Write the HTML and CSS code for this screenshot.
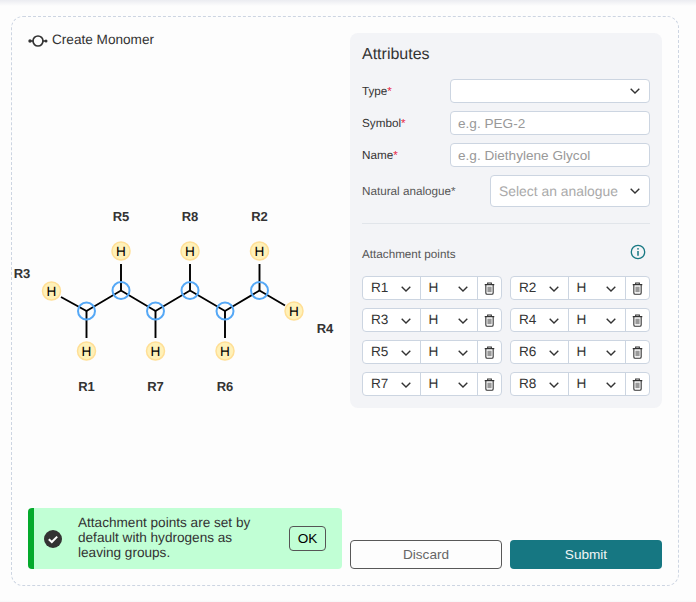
FILE: index.html
```html
<!DOCTYPE html>
<html lang="en">
<head>
<meta charset="UTF-8">
<title>Create Monomer</title>
<link rel="stylesheet" href="styles.css">
</head>
<body>
<svg class="defs" width="0" height="0">
    <symbol id="chev" viewBox="0 0 10 6">
        <path d="M0.7 0.8 L5 5 L9.3 0.8" fill="none" stroke="#333" stroke-width="1.4"/>
    </symbol>
    <symbol id="trash" viewBox="0 0 12 14">
        <path d="M0.8 2.8 H11.2 M4 2.6 V1 H8 V2.6 M2 2.8 V11.8 Q2 13.3 3.5 13.3 H8.5 Q10 13.3 10 11.8 V2.8" fill="none" stroke="#333" stroke-width="1.2"/>
        <rect x="3.7" y="5" width="4.6" height="6" fill="#999"/>
    </symbol>
</svg>
<div class="card">
    <div class="left">
        <div class="head">
            <svg width="20" height="12" viewBox="0 0 20 12">
                <circle cx="10" cy="6" r="5" fill="none" stroke="#333" stroke-width="1.7"/>
                <path d="M2 6 H5 M15 6 H18" stroke="#333" stroke-width="1.7"/>
                <circle cx="2" cy="6" r="1.7" fill="#333"/>
                <circle cx="18" cy="6" r="1.5" fill="#333"/>
            </svg>
            <span>Create Monomer</span>
        </div>
        <!-- molecule, viewBox uses page coordinates -->
        <svg class="mol" width="330" height="220" viewBox="12 190 330 220">
            <g class="bond">
                <path d="M61 297 L86.5 311 L121 290.5 L155.5 311 L190 290.5 L225 311 L259.5 290.5 L285 305.5"/>
                <path d="M86.5 311 V338 M121 290.5 V264 M155.5 311 V338 M190 290.5 V264 M225 311 V338 M259.5 290.5 V264"/>
            </g>
            <g class="atom">
                <circle cx="86.5" cy="311" r="8.5"/>
                <circle cx="121" cy="290.5" r="8.5"/>
                <circle cx="155.5" cy="311" r="8.5"/>
                <circle cx="190" cy="290.5" r="8.5"/>
                <circle cx="225" cy="311" r="8.5"/>
                <circle cx="259.5" cy="290.5" r="8.5"/>
            </g>
            <g class="hyd">
                <circle cx="51.5" cy="291" r="9"/>
                <circle cx="86.5" cy="351" r="9"/>
                <circle cx="121" cy="251" r="9"/>
                <circle cx="155.5" cy="351" r="9"/>
                <circle cx="190" cy="251" r="9"/>
                <circle cx="225" cy="351" r="9"/>
                <circle cx="259.5" cy="251" r="9"/>
                <circle cx="294" cy="311" r="9"/>
            </g>
            <g class="hyd-text">
                <text x="51.5" y="296">H</text>
                <text x="86.5" y="356">H</text>
                <text x="121" y="256">H</text>
                <text x="155.5" y="356">H</text>
                <text x="190" y="256">H</text>
                <text x="225" y="356">H</text>
                <text x="259.5" y="256">H</text>
                <text x="294" y="316">H</text>
            </g>
            <g class="rlabel">
                <text x="121" y="221">R5</text>
                <text x="190" y="221">R8</text>
                <text x="259.5" y="221">R2</text>
                <text x="22" y="278">R3</text>
                <text x="325" y="333">R4</text>
                <text x="86.5" y="391">R1</text>
                <text x="155.5" y="391">R7</text>
                <text x="225" y="391">R6</text>
            </g>
        </svg>
        <div class="toast">
            <svg width="18" height="18" viewBox="0 0 18 18">
                <circle cx="9" cy="9" r="9" fill="#333"/>
                <path d="M4.8 9.3 L7.8 12 L13.2 6.6" fill="none" stroke="#fff" stroke-width="2"/>
            </svg>
            <p>Attachment points are set by default with hydrogens as leaving groups.</p>
            <button class="ok">OK</button>
        </div>
    </div>
    <div class="right">
        <div class="panel">
            <h2>Attributes</h2>
            <div class="field">
                <label>Type<em>*</em></label>
                <div class="select wide"><span></span><svg width="10" height="6"><use href="#chev"/></svg></div>
            </div>
            <div class="field">
                <label>Symbol<em>*</em></label>
                <input class="wide" placeholder="e.g. PEG-2">
            </div>
            <div class="field">
                <label>Name<em>*</em></label>
                <input class="wide" placeholder="e.g. Diethylene Glycol">
            </div>
            <div class="field">
                <label class="small">Natural analogue*</label>
                <div class="select analogue"><span>Select an analogue</span><svg width="10" height="6"><use href="#chev"/></svg></div>
            </div>
            <hr>
            <div class="points-head">
                <span>Attachment points</span>
                <svg width="16" height="16" viewBox="0 0 16 16">
                    <circle cx="8" cy="8" r="6.7" fill="none" stroke="#167782" stroke-width="1.3"/>
                    <path d="M8 7 V11.8" stroke="#167782" stroke-width="1.5"/>
                    <circle cx="8" cy="4.8" r="0.9" fill="#167782"/>
                </svg>
            </div>
            <div class="points">
                <div class="point">
                    <div class="cell"><span>R1</span><svg width="10" height="6"><use href="#chev"/></svg></div>
                    <div class="cell"><span>H</span><svg width="10" height="6"><use href="#chev"/></svg></div>
                    <div class="del"><svg width="11" height="13"><use href="#trash"/></svg></div>
                </div>
                <div class="point">
                    <div class="cell"><span>R2</span><svg width="10" height="6"><use href="#chev"/></svg></div>
                    <div class="cell"><span>H</span><svg width="10" height="6"><use href="#chev"/></svg></div>
                    <div class="del"><svg width="11" height="13"><use href="#trash"/></svg></div>
                </div>
                <div class="point">
                    <div class="cell"><span>R3</span><svg width="10" height="6"><use href="#chev"/></svg></div>
                    <div class="cell"><span>H</span><svg width="10" height="6"><use href="#chev"/></svg></div>
                    <div class="del"><svg width="11" height="13"><use href="#trash"/></svg></div>
                </div>
                <div class="point">
                    <div class="cell"><span>R4</span><svg width="10" height="6"><use href="#chev"/></svg></div>
                    <div class="cell"><span>H</span><svg width="10" height="6"><use href="#chev"/></svg></div>
                    <div class="del"><svg width="11" height="13"><use href="#trash"/></svg></div>
                </div>
                <div class="point">
                    <div class="cell"><span>R5</span><svg width="10" height="6"><use href="#chev"/></svg></div>
                    <div class="cell"><span>H</span><svg width="10" height="6"><use href="#chev"/></svg></div>
                    <div class="del"><svg width="11" height="13"><use href="#trash"/></svg></div>
                </div>
                <div class="point">
                    <div class="cell"><span>R6</span><svg width="10" height="6"><use href="#chev"/></svg></div>
                    <div class="cell"><span>H</span><svg width="10" height="6"><use href="#chev"/></svg></div>
                    <div class="del"><svg width="11" height="13"><use href="#trash"/></svg></div>
                </div>
                <div class="point">
                    <div class="cell"><span>R7</span><svg width="10" height="6"><use href="#chev"/></svg></div>
                    <div class="cell"><span>H</span><svg width="10" height="6"><use href="#chev"/></svg></div>
                    <div class="del"><svg width="11" height="13"><use href="#trash"/></svg></div>
                </div>
                <div class="point">
                    <div class="cell"><span>R8</span><svg width="10" height="6"><use href="#chev"/></svg></div>
                    <div class="cell"><span>H</span><svg width="10" height="6"><use href="#chev"/></svg></div>
                    <div class="del"><svg width="11" height="13"><use href="#trash"/></svg></div>
                </div>
            </div>
        </div>
        <div class="actions">
            <button class="discard">Discard</button>
            <button class="submit">Submit</button>
        </div>
    </div>
</div>
</body>
</html>
```

FILE: styles.css
```css
* {
    box-sizing: border-box;
}
html, body {
    height: 100%;
}
body {
    margin: 0;
    padding: 16px 17px 16px 11px;
    overflow: hidden;
    background: linear-gradient(#ebecf1 0, #fdfdfd 6px, #fdfdfd 600px, #f6f6f8 602px);
    font-family: "Liberation Sans", Arial, sans-serif;
    font-size: 13.6px;
    color: #333;
    text-rendering: geometricPrecision;
}
.defs {
    display: block;
}
.card {
    display: flex;
    gap: 8px;
    height: 570px;
    padding: 16px 15px 16px 0;
    border: 1px dashed #cdd5e2;
    border-radius: 12px;
}

/* left side */
.left {
    display: flex;
    flex-direction: column;
    width: 330px;
}
.head {
    display: flex;
    align-items: center;
    gap: 4px;
    height: 14px;
    margin-left: 16px;
    line-height: 14px;
}
.head svg {
    margin-top: 2px;
}
.mol {
    display: block;
    margin-top: 143px;
}
.bond path {
    fill: none;
    stroke: #000;
    stroke-width: 1.9;
}
.atom circle {
    fill: none;
    stroke: #55a8f6;
    stroke-width: 2;
}
.hyd circle {
    fill: #fff1b8;
    stroke: #ffdf96;
    stroke-width: 1.5;
}
.hyd-text text {
    font-size: 13.6px;
    text-anchor: middle;
    fill: #000;
}
.rlabel text {
    font-size: 13px;
    font-weight: bold;
    text-anchor: middle;
    fill: #333;
}
.toast {
    display: flex;
    align-items: center;
    width: 314px;
    height: 61px;
    margin-top: auto;
    margin-left: 16px;
    padding-left: 10px;
    padding-right: 16px;
    background: #c1ffd5;
    border-left: 6px solid #04aa2c;
    border-radius: 4px;
}
.toast svg {
    flex: none;
}
.toast p {
    flex: 1;
    margin: -1px 12px 1px 16px;
    line-height: 15px;
}
.ok {
    width: 37px;
    height: 25px;
    padding: 0;
    background: transparent;
    border: 1px solid #555;
    border-radius: 4px;
    font: inherit;
    color: #000;
}

/* right side */
.right {
    display: flex;
    flex-direction: column;
    width: 312px;
}
.panel {
    height: 375px;
    padding: 12px;
    background: #f3f4f7;
    border-radius: 8px;
}
.panel h2 {
    height: 18px;
    margin: 0 0 16px;
    padding-top: 1px;
    font-size: 16px;
    font-weight: normal;
    line-height: 18px;
}
.field {
    display: flex;
    align-items: center;
    justify-content: space-between;
    margin-bottom: 8px;
}
.field label {
    font-size: 11.7px;
}
.field label em {
    font-style: normal;
    color: #e8143c;
}
.field label.small {
    color: #555;
}
.wide, .analogue {
    background: #fff;
    border: 1px solid #ccd5e1;
    border-radius: 4px;
}
.wide {
    width: 200px;
    height: 24px;
}
input.wide {
    padding: 0 7px;
    font: inherit;
    outline: none;
}
input.wide::placeholder {
    color: #999;
}
.select {
    display: flex;
    align-items: center;
    justify-content: space-between;
    padding-right: 9px;
}
.analogue {
    width: 160px;
    height: 32px;
    padding-left: 8px;
    font-size: 13.9px;
    color: #aaa;
}
hr {
    height: 1px;
    margin: 16px 0 0;
    background: #e1e5ea;
    border: 0;
}
.points-head {
    display: flex;
    align-items: center;
    justify-content: space-between;
    height: 16px;
    margin-top: 20px;
    padding-right: 4px;
    font-size: 11.7px;
    color: #555;
}
.points-head span {
    padding-top: 4px;
}
.points {
    display: grid;
    grid-template-columns: 140px 140px;
    gap: 8px;
    margin-top: 16px;
}
.point {
    display: flex;
    height: 24px;
    background: #fff;
    border: 1px solid #ccd5e1;
    border-radius: 4px;
}
.cell {
    display: flex;
    align-items: center;
    justify-content: space-between;
    width: 57.5px;
    padding: 0 9px 1px 8px;
    border-right: 1.5px solid #ccd5e1;
    color: #333;
}
.cell svg {
    flex: none;
    margin-top: 2px;
}
.del {
    display: flex;
    align-items: center;
    justify-content: center;
    flex: 1;
}

.actions {
    display: flex;
    gap: 8px;
    margin-top: auto;
}
.actions button {
    flex: 0 0 152px;
    height: 29px;
    padding: 0;
    font: inherit;
    border-radius: 4px;
}
.discard {
    background: transparent;
    border: 1px solid #585858;
    color: #666;
}
.submit {
    background: #167782;
    border: 0;
    color: #f0f5f6;
}
```
